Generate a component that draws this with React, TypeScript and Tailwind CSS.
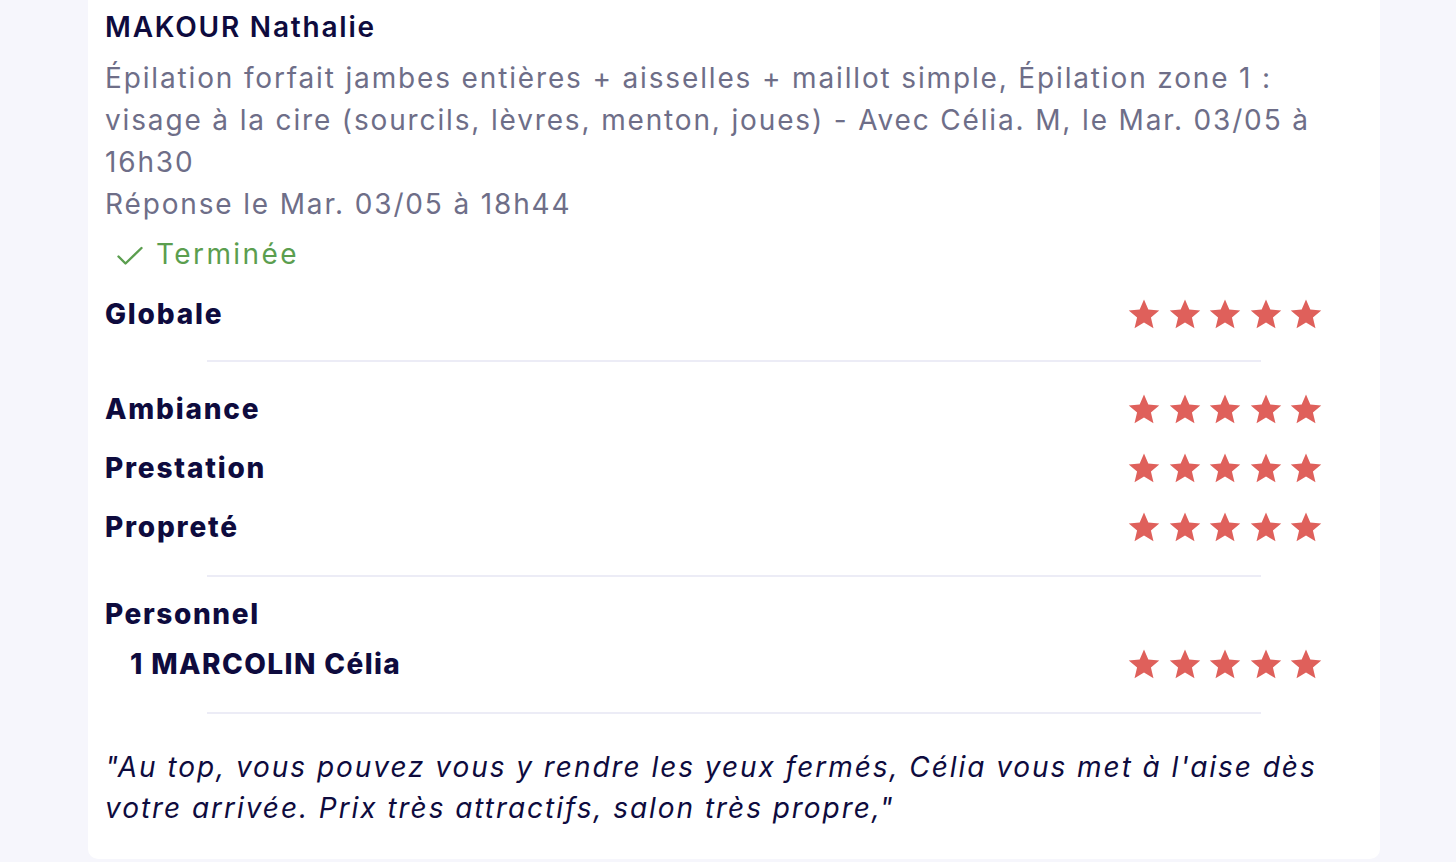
import React from 'react';

type Rating = { label: string; value: number };

const Star = () => (
    <svg viewBox="0 0 24 24" className="w-[34px] h-[34px]" fill="#df605b">
        <path d="M12 1.8l3.05 7.1 7.7.62-5.86 5.02 1.8 7.52L12 18.03l-6.69 4.03 1.8-7.52L1.25 9.52l7.7-.62z" />
    </svg>
);

const Stars = ({ value }: { value: number }) => (
    <div className="flex items-center gap-[6.5px]">
        {Array.from({ length: 5 }).map((_, i) => (
            <span key={i} className={i < value ? '' : 'opacity-20'}>
                <Star />
            </span>
        ))}
    </div>
);

const Divider = ({ className = '' }: { className?: string }) => (
    <div className={`mx-[102px] h-[2px] bg-[#ececf6] ${className}`} />
);

const RatingRow = ({ label, value, className = '' }: Rating & { className?: string }) => (
    <div className={`flex items-center justify-between h-[40px] pr-[40px] ${className}`}>
        <span className="font-extrabold text-[#0e0b3e] tracking-[1.8px]">{label}</span>
        <Stars value={value} />
    </div>
);

export default function App() {
    const details: Rating[] = [
        { label: 'Ambiance', value: 5 },
        { label: 'Prestation', value: 5 },
        { label: 'Propreté', value: 5 },
    ];

    return (
        <div className="min-h-screen bg-[#f6f6fc] pl-[88px] font-['Inter','Noto_Sans',sans-serif] text-[28px]">
            <div className="w-[1292px] bg-white rounded-b-[10px] px-[17px] pt-[7px] pb-[30px]">
                {/* Header */}
                <div className="leading-[40px] font-semibold text-[#0e0b3e] tracking-[1.8px]">MAKOUR Nathalie</div>
                <div className="mt-[10px] leading-[42px] text-[#6e6e88] tracking-[1.85px]">
                    <p>
                        Épilation forfait jambes entières + aisselles + maillot simple, Épilation zone 1 : visage à la cire
                        (sourcils, lèvres, menton, joues) - Avec Célia. M, le Mar. 03/05 à 16h30
                    </p>
                    <p>Réponse le Mar. 03/05 à 18h44</p>
                </div>
                <div className="mt-[9px] h-[40px] flex items-center pl-[12px] gap-[13px] text-[#5b9e4f] tracking-[2.4px]">
                    <svg viewBox="0 0 26 20" className="w-[26px] h-[20px] mt-[4px]" fill="none" stroke="#5b9e4f" strokeWidth="2.4" strokeLinecap="round" strokeLinejoin="round">
                        <path d="M1.5 10.5l7 7L24.5 2" />
                    </svg>
                    <span>Terminée</span>
                </div>

                {/* Global rating */}
                <RatingRow label="Globale" value={5} className="mt-[20px]" />
                <Divider className="mt-[26px]" />

                {/* Detail ratings */}
                <div className="mt-[27px] flex flex-col gap-[19px]">
                    {details.map((d) => (
                        <RatingRow key={d.label} {...d} />
                    ))}
                </div>
                <Divider className="mt-[28px]" />

                {/* Staff */}
                <div className="mt-[17px] h-[40px] flex items-center font-extrabold text-[#0e0b3e] tracking-[1.6px]">Personnel</div>
                <RatingRow label="1 MARCOLIN Célia" value={5} className="mt-[10px] pl-[25px] [&>span]:tracking-[1.4px]" />
                <Divider className="mt-[28px]" />

                {/* Comment */}
                <p className="mt-[33px] leading-[41px] italic text-[#0e0b3e] tracking-[1.95px]">
                    "Au top, vous pouvez vous y rendre les yeux fermés, Célia vous met à l'aise dès votre arrivée. Prix très
                    attractifs, salon très propre,"
                </p>
            </div>
        </div>
    );
}
